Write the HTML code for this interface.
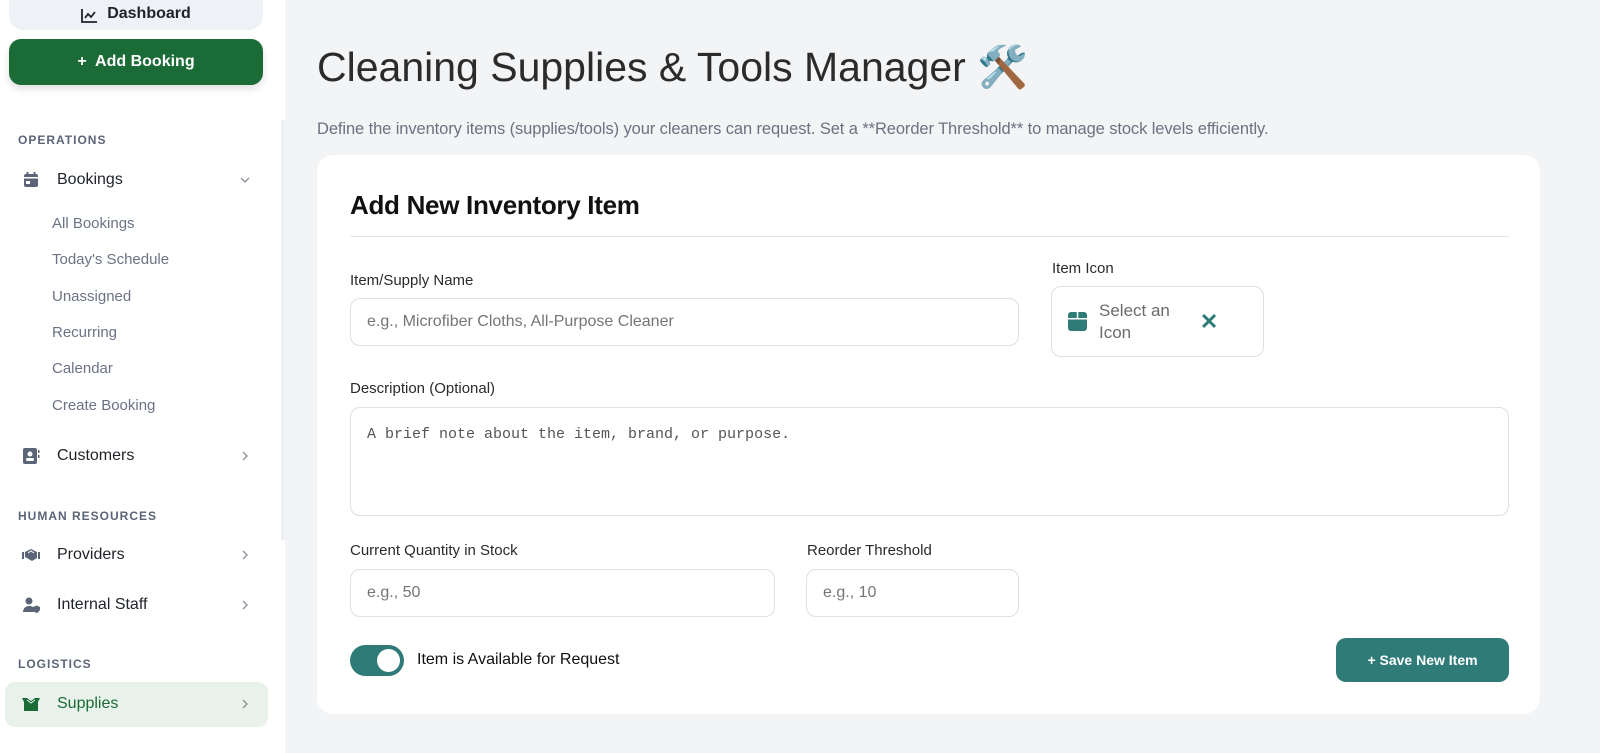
<!DOCTYPE html>
<html><head><meta charset="utf-8"><style>
*{box-sizing:border-box;margin:0;padding:0}
body{width:1600px;height:753px;overflow:hidden;background:#f3f4f6;font-family:"Liberation Sans",sans-serif;position:relative;color:#1f2328}
.sb{position:absolute;left:0;top:0;width:285px;height:753px;background:#fff}
.scroll{position:absolute;left:281px;top:120px;width:4px;height:420px;background:#eef0f3}
.dash{position:absolute;left:9px;top:-10px;width:254px;height:40px;background:#eef2f7;border-radius:14px;font-size:16px;font-weight:bold;display:flex;justify-content:center;align-items:flex-end;padding-bottom:7px}
.add{position:absolute;left:9px;top:39px;width:254px;height:46px;background:#1b6b37;border-radius:12px;color:#fff;font-weight:bold;font-size:16px;text-align:center;line-height:46px;box-shadow:0 4px 8px rgba(0,0,0,.12)}
.sec{position:absolute;left:18px;font-size:12px;font-weight:bold;letter-spacing:1px;color:#5b6577}
.it{position:absolute;left:22px;font-size:16px;color:#1f2328;display:flex;align-items:center}
.it .ic{width:18px;height:18px;margin-right:17px}
.sub{position:absolute;left:52px;font-size:15px;color:#6b7385}
.chev{position:absolute;left:240px;width:10px;height:10px}
.main h1{position:absolute;left:317px;top:44px;font-size:41px;font-weight:normal;color:#2b2b2b}
.desc{position:absolute;left:317px;top:120px;font-size:16.5px;color:#6b7280;letter-spacing:-.1px}
.card{position:absolute;left:317px;top:155px;width:1223px;height:559px;background:#fff;border-radius:16px}
.card h2{position:absolute;left:33px;top:35px;font-size:26px;font-weight:bold;color:#111;letter-spacing:-.3px}
.hr{position:absolute;left:33px;top:81px;width:1159px;height:1px;background:#e3e5e8}
.lb{position:absolute;font-size:15px;color:#2a2a2a}
.in{position:absolute;border:1px solid #dcdfe3;border-radius:10px;font-size:16px;color:#757575;padding-left:16px;display:flex;align-items:center}
</style></head><body>
<div class="sb">
 <div class="dash"><svg width="16" height="14" viewBox="0 0 16 14" style="margin-right:10px"><path d="M1 0v13h15" stroke="#1f2328" stroke-width="1.8" fill="none"/><path d="M4 9l3-4 3 3 4-5" stroke="#1f2328" stroke-width="1.8" fill="none"/></svg>Dashboard</div>
 <div class="add">+&nbsp; Add Booking</div>
 <div class="scroll"></div>
 <div class="sec" style="top:133px">OPERATIONS</div>
 <div class="it" style="top:171px"><svg class="ic" viewBox="0 0 18 18"><rect x="2" y="3" width="14" height="13" rx="2" fill="#5b6577"/><rect x="4.5" y="1" width="2" height="3" fill="#5b6577"/><rect x="11.5" y="1" width="2" height="3" fill="#5b6577"/><rect x="2" y="6" width="14" height="1.5" fill="#fff"/><rect x="4" y="10" width="4" height="3" fill="#fff"/></svg>Bookings</div>
 <svg class="chev" style="top:175px" viewBox="0 0 10 10"><path d="M1 3l4 4 4-4" stroke="#8a8f99" stroke-width="1.3" fill="none"/></svg>
 <div class="sub" style="top:215px">All Bookings</div>
 <div class="sub" style="top:251px">Today's Schedule</div>
 <div class="sub" style="top:288px">Unassigned</div>
 <div class="sub" style="top:324px">Recurring</div>
 <div class="sub" style="top:360px">Calendar</div>
 <div class="sub" style="top:397px">Create Booking</div>
 <div class="it" style="top:447px"><svg class="ic" viewBox="0 0 18 18"><rect x="1" y="1" width="14" height="16" rx="2" fill="#5b6577"/><circle cx="8" cy="7" r="2.5" fill="#fff"/><rect x="4" y="11" width="8" height="3" rx="1.5" fill="#fff"/><rect x="16" y="3" width="1.5" height="3" fill="#5b6577"/><rect x="16" y="8" width="1.5" height="3" fill="#5b6577"/></svg>Customers</div>
 <svg class="chev" style="top:451px" viewBox="0 0 10 10"><path d="M3 1l4 4-4 4" stroke="#8a8f99" stroke-width="1.3" fill="none"/></svg>
 <div class="sec" style="top:509px">HUMAN RESOURCES</div>
 <div class="it" style="top:546px"><svg class="ic" viewBox="0 0 18 18"><path d="M0 6h2v7H0zM16 6h2v7h-2zM3 6l6-3 6 3v6l-5 3-7-4z" fill="#5b6577"/><path d="M6 7l3-2 3 2" stroke="#fff" fill="none"/></svg>Providers</div>
 <svg class="chev" style="top:550px" viewBox="0 0 10 10"><path d="M3 1l4 4-4 4" stroke="#8a8f99" stroke-width="1.3" fill="none"/></svg>
 <div class="it" style="top:596px"><svg class="ic" viewBox="0 0 18 18"><circle cx="7" cy="5" r="3.5" fill="#5b6577"/><path d="M1 16c0-4 3-6 6-6s4 1 5 2v4z" fill="#5b6577"/><path d="M11 11l3.5-1.5 3.5 1.5v2c0 2-2 3.5-3.5 4-1.5-.5-3.5-2-3.5-4z" fill="#5b6577"/></svg>Internal Staff</div>
 <svg class="chev" style="top:600px" viewBox="0 0 10 10"><path d="M3 1l4 4-4 4" stroke="#8a8f99" stroke-width="1.3" fill="none"/></svg>
 <div class="sec" style="top:657px">LOGISTICS</div>
 <div style="position:absolute;left:5px;top:682px;width:263px;height:45px;background:#e8f2ea;border-radius:10px"></div>
 <div class="it" style="top:695px;color:#1b6b37"><svg class="ic" viewBox="0 0 18 18"><path d="M2 7h14v9H2z" fill="#1b6b37"/><path d="M0 3h5l4 3 4-3h5l-2 4H2z" fill="#1b6b37"/><path d="M5 5l4 3 4-3" stroke="#e8f2ea" fill="none"/></svg>Supplies</div>
 <svg class="chev" style="top:699px" viewBox="0 0 10 10"><path d="M3 1l4 4-4 4" stroke="#8a8f99" stroke-width="1.3" fill="none"/></svg>
</div>
<div class="main">
 <h1>Cleaning Supplies &amp; Tools Manager 🛠️</h1>
 <div class="desc">Define the inventory items (supplies/tools) your cleaners can request. Set a **Reorder Threshold** to manage stock levels efficiently.</div>
 <div class="card">
  <h2>Add New Inventory Item</h2>
  <div class="hr"></div>
  <div class="lb" style="left:33px;top:117px">Item/Supply Name</div>
  <div class="in" style="left:33px;top:143px;width:669px;height:48px">e.g., Microfiber Cloths, All-Purpose Cleaner</div>
  <div class="lb" style="left:735px;top:105px">Item Icon</div>
  <div class="in" style="left:734px;top:131px;width:213px;height:71px;color:#6b6b6b;font-size:17px;line-height:22px">
   <svg width="19" height="19" viewBox="0 0 19 19" style="margin-right:12px;flex:none"><rect x="0" y="0" width="19" height="19" rx="3" fill="#2e7b78"/><rect x="0" y="6" width="19" height="1.5" fill="#fff"/><rect x="8.8" y="0" width="1.5" height="6" fill="#fff"/></svg>
   <span>Select an<br>Icon</span>
   <span style="margin-left:30px;color:#2e7b78;font-size:22px;font-weight:bold">✕</span>
  </div>
  <div class="lb" style="left:33px;top:225px">Description (Optional)</div>
  <div class="in" style="left:33px;top:252px;width:1159px;height:109px;align-items:flex-start;padding-top:18px;font-family:'Liberation Mono',monospace;font-size:15px;color:#555">A brief note about the item, brand, or purpose.</div>
  <div class="lb" style="left:33px;top:387px">Current Quantity in Stock</div>
  <div class="in" style="left:33px;top:414px;width:425px;height:48px">e.g., 50</div>
  <div class="lb" style="left:490px;top:387px">Reorder Threshold</div>
  <div class="in" style="left:489px;top:414px;width:213px;height:48px">e.g., 10</div>
  <div style="position:absolute;left:33px;top:490px;width:54px;height:31px;border-radius:16px;background:#2e7b78"><div style="position:absolute;right:4px;top:4px;width:23px;height:23px;border-radius:50%;background:#fff"></div></div>
  <div class="lb" style="left:100px;top:496px;font-size:16px;color:#111">Item is Available for Request</div>
  <div style="position:absolute;left:1019px;top:483px;width:173px;height:44px;background:#2e7b78;border-radius:10px;color:#fff;font-weight:bold;font-size:14px;text-align:center;line-height:44px">+ Save New Item</div>
 </div>
</div>
</body></html>
